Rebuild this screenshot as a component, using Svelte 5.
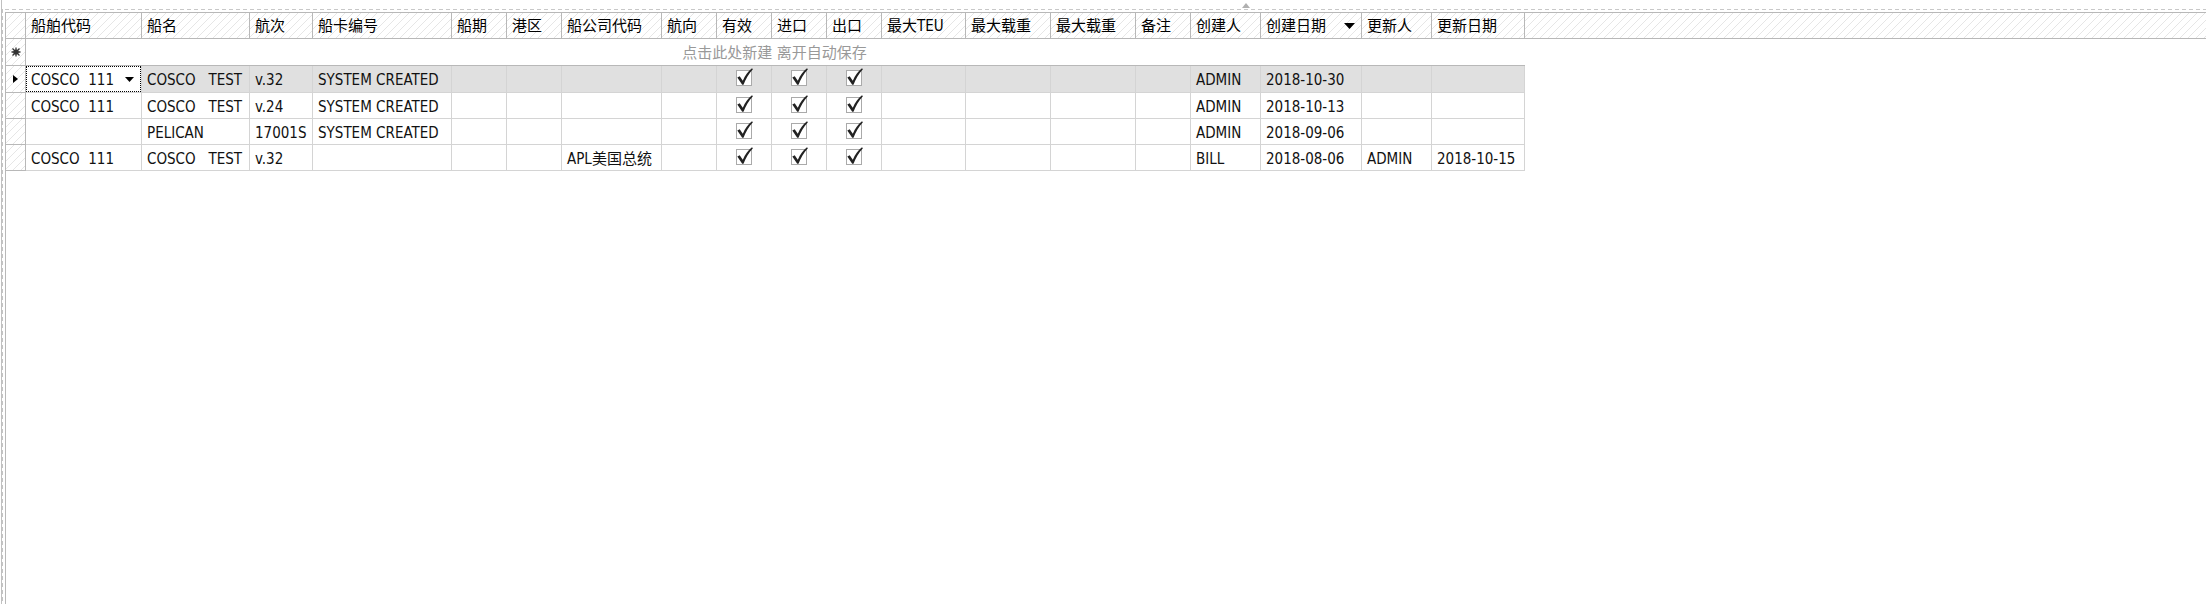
<script>
  const columns = [
    { key: 'code', title: '船舶代码', width: 116 },
    { key: 'name', title: '船名', width: 108 },
    { key: 'voyage', title: '航次', width: 63 },
    { key: 'card', title: '船卡编号', width: 139 },
    { key: 'schedule', title: '船期', width: 55 },
    { key: 'port', title: '港区', width: 55 },
    { key: 'carrier', title: '船公司代码', width: 100 },
    { key: 'direction', title: '航向', width: 55 },
    { key: 'active', title: '有效', width: 55, check: true },
    { key: 'inbound', title: '进口', width: 55, check: true },
    { key: 'outbound', title: '出口', width: 55, check: true },
    { key: 'maxTeu', title: '最大TEU', width: 84 },
    { key: 'maxLoad', title: '最大载重', width: 85 },
    { key: 'maxLoad2', title: '最大载重', width: 85 },
    { key: 'note', title: '备注', width: 55 },
    { key: 'creator', title: '创建人', width: 70 },
    { key: 'created', title: '创建日期', width: 101, sorted: true },
    { key: 'updater', title: '更新人', width: 70 },
    { key: 'updated', title: '更新日期', width: 93 }
  ];

  const code = 'COSCO\u00a0\u00a0111';
  const name = 'COSCO\u00a0\u00a0\u00a0TEST';
  const flags = { active: true, inbound: true, outbound: true };

  let rows = $state([
    { code, name, voyage: 'v.32', card: 'SYSTEM CREATED', creator: 'ADMIN', created: '2018-10-30', ...flags },
    { code, name, voyage: 'v.24', card: 'SYSTEM CREATED', creator: 'ADMIN', created: '2018-10-13', ...flags },
    { name: 'PELICAN', voyage: '17001S', card: 'SYSTEM CREATED', creator: 'ADMIN', created: '2018-09-06', ...flags },
    { code, name, voyage: 'v.32', carrier: 'APL美国总统', creator: 'BILL', created: '2018-08-06', updater: 'ADMIN', updated: '2018-10-15', ...flags }
  ]);
  let current = $state(0);
</script>

<div class="panel">
  <div class="rail"></div>
  <div class="main">
    <div class="splitter">
      <svg class="grip" width="8" height="5" viewBox="0 0 8 5" aria-hidden="true"><path d="M4 0L8 5H0Z" fill="#b0b0b0" /></svg>
    </div>
    <div class="grid">
      <table>
        <colgroup>
          <col style:width="20px" />
          {#each columns as col}
            <col style:width="{col.width}px" />
          {/each}
          <col />
        </colgroup>
        <thead>
          <tr>
            <th class="mark"></th>
            {#each columns as col}
              <th scope="col">
                <button type="button">
                  <span>{col.title}</span>
                  {#if col.sorted}
                    <svg class="sort" width="11" height="6" viewBox="0 0 11 6" aria-hidden="true"><path d="M0 0H11L5.500 6Z" fill="#000" /></svg>
                  {/if}
                </button>
              </th>
            {/each}
            <th class="rest"></th>
          </tr>
        </thead>
        <tbody>
          <tr class="new">
            <td class="mark">
              <svg width="10" height="10" viewBox="0 0 10 10" aria-hidden="true">
                <path d="M5 0.500V9.500M0.500 5H9.500M1.500 1.500L8.500 8.500M8.500 1.500L1.500 8.500" stroke="#333" stroke-width="1.300" />
                <circle cx="5" cy="5" r="2.600" fill="#333" />
              </svg>
            </td>
            <td class="hint" colspan={columns.length}>点击此处新建 离开自动保存</td>
            <td class="rest"></td>
          </tr>
          {#each rows as row, r}
            <tr class:current={r === current} onclick={() => (current = r)}>
              <td class="mark">
                {#if r === current}
                  <svg width="5" height="8" viewBox="0 0 5 8" aria-hidden="true"><path d="M0 0L5 4L0 8Z" fill="#000" /></svg>
                {/if}
              </td>
              {#each columns as col}
                {#if col.check}
                  <td class="check">
                    <label>
                      <input type="checkbox" bind:checked={row[col.key]} aria-label={col.title} />
                      <svg width="17" height="18" viewBox="0 0 17 18" aria-hidden="true">
                        <path d="M1.300 9.600L3.700 8.300L6.800 12.700C9 7.800 12 3.400 16 0.300L16.900 1.200C12.700 5.800 9.800 10.600 7.500 16.700L6.200 16.700Z" fill="#222" />
                      </svg>
                    </label>
                  </td>
                {:else if col.key === 'code' && r === current}
                  <td class="edit">
                    <div class="combo">
                      <select bind:value={row.code} aria-label={col.title}>
                        <option>{code}</option>
                      </select>
                      <svg width="9" height="5" viewBox="0 0 9 5" aria-hidden="true"><path d="M0 0H9L4.500 5Z" fill="#000" /></svg>
                    </div>
                  </td>
                {:else}
                  <td>{row[col.key] ?? ''}</td>
                {/if}
              {/each}
              <td class="rest"></td>
            </tr>
          {/each}
        </tbody>
      </table>
    </div>
  </div>
</div>

<style>
  :global(body) {
    background: #fff;
  }
  .panel {
    display: flex;
    box-sizing: border-box;
    min-height: 100vh;
    font: 15px/20px "DejaVu Sans Condensed", "Noto Sans CJK SC", sans-serif;
    color: #111;
  }
  .rail {
    flex: none;
    width: 5px;
    background:
      linear-gradient(#c0c0c0, #c0c0c0) 1px 0 / 1px 100% no-repeat,
      repeating-linear-gradient(180deg, #c4c4c4 0 4px, #fff 4px 7px) 2px 9px / 1px 100% no-repeat;
  }
  .main {
    flex: 1;
    min-width: 0;
    display: flex;
    flex-direction: column;
  }
  .splitter {
    height: 12px;
    box-sizing: border-box;
    padding-top: 3px;
    background: repeating-linear-gradient(90deg, #c8c8c8 0 4px, #fff 4px 7px) 0 9px / 100% 1px no-repeat;
  }
  .grip {
    display: block;
    margin-left: 56.2%;
  }
  .grid {
    flex: 1;
    border-left: 1px solid #b8b8b8;
    border-top: 1px solid #b8b8b8;
  }
  table {
    table-layout: fixed;
    width: 100%;
    border-collapse: separate;
    border-spacing: 0;
  }
  th,
  td {
    box-sizing: border-box;
    height: 26px;
    padding: 0 0 0 5px;
    border-right: 1px solid #d4d4d4;
    border-bottom: 1px solid #d4d4d4;
    text-align: left;
    font-weight: 400;
    white-space: nowrap;
  }
  td {
    padding-top: 2px;
  }
  th,
  .mark {
    border-color: #b8b8b8;
    background: linear-gradient(135deg, transparent 45%, #e6e6e6 45% 55%, transparent 55%) 0 0 / 8px 8px;
  }
  .mark {
    padding: 0;
    text-align: center;
  }
  .mark svg {
    display: block;
    margin: 0 auto;
  }
  th button {
    display: flex;
    align-items: center;
    justify-content: space-between;
    width: 100%;
    padding: 0 6px 0 0;
    border: 0;
    background: none;
    font: inherit;
    color: #000;
    text-align: left;
  }
  .new td {
    height: 27px;
    border-bottom-color: #b8b8b8;
  }
  .new .hint {
    padding: 2px 2px 0 0;
    border-right: 0;
    text-align: center;
    color: #999;
  }
  td.rest,
  .new td.rest {
    border: 0;
  }
  th.rest {
    border-right: 0;
  }
  .current td {
    height: 27px;
  }
  .current td:not(.mark, .rest, .edit) {
    background: #e0e0e0;
  }
  .current td.edit {
    padding: 0;
  }
  .combo {
    display: flex;
    align-items: center;
    box-sizing: border-box;
    height: 26px;
    padding: 0 6px 0 4px;
    border: 1px dotted #000;
    background: #fff;
  }
  .combo select {
    flex: 1;
    min-width: 0;
    appearance: none;
    margin: 0;
    padding: 2px 0 0;
    border: 0;
    outline: 0;
    background: none;
    font: inherit;
    color: inherit;
  }
  .combo svg {
    flex: none;
    pointer-events: none;
  }
  td.check {
    padding: 0;
  }
  .check label {
    display: grid;
    justify-content: center;
    align-items: end;
    height: 18px;
    margin-bottom: 4px;
  }
  .check input {
    grid-area: 1 / 1;
    appearance: none;
    box-sizing: border-box;
    width: 16px;
    height: 16px;
    margin: 0;
    border: 1px solid #aaa;
    background: #fff;
  }
  .check svg {
    grid-area: 1 / 1;
    pointer-events: none;
    visibility: hidden;
    z-index: 1;
  }
  .check input:checked + svg {
    visibility: visible;
  }
</style>
